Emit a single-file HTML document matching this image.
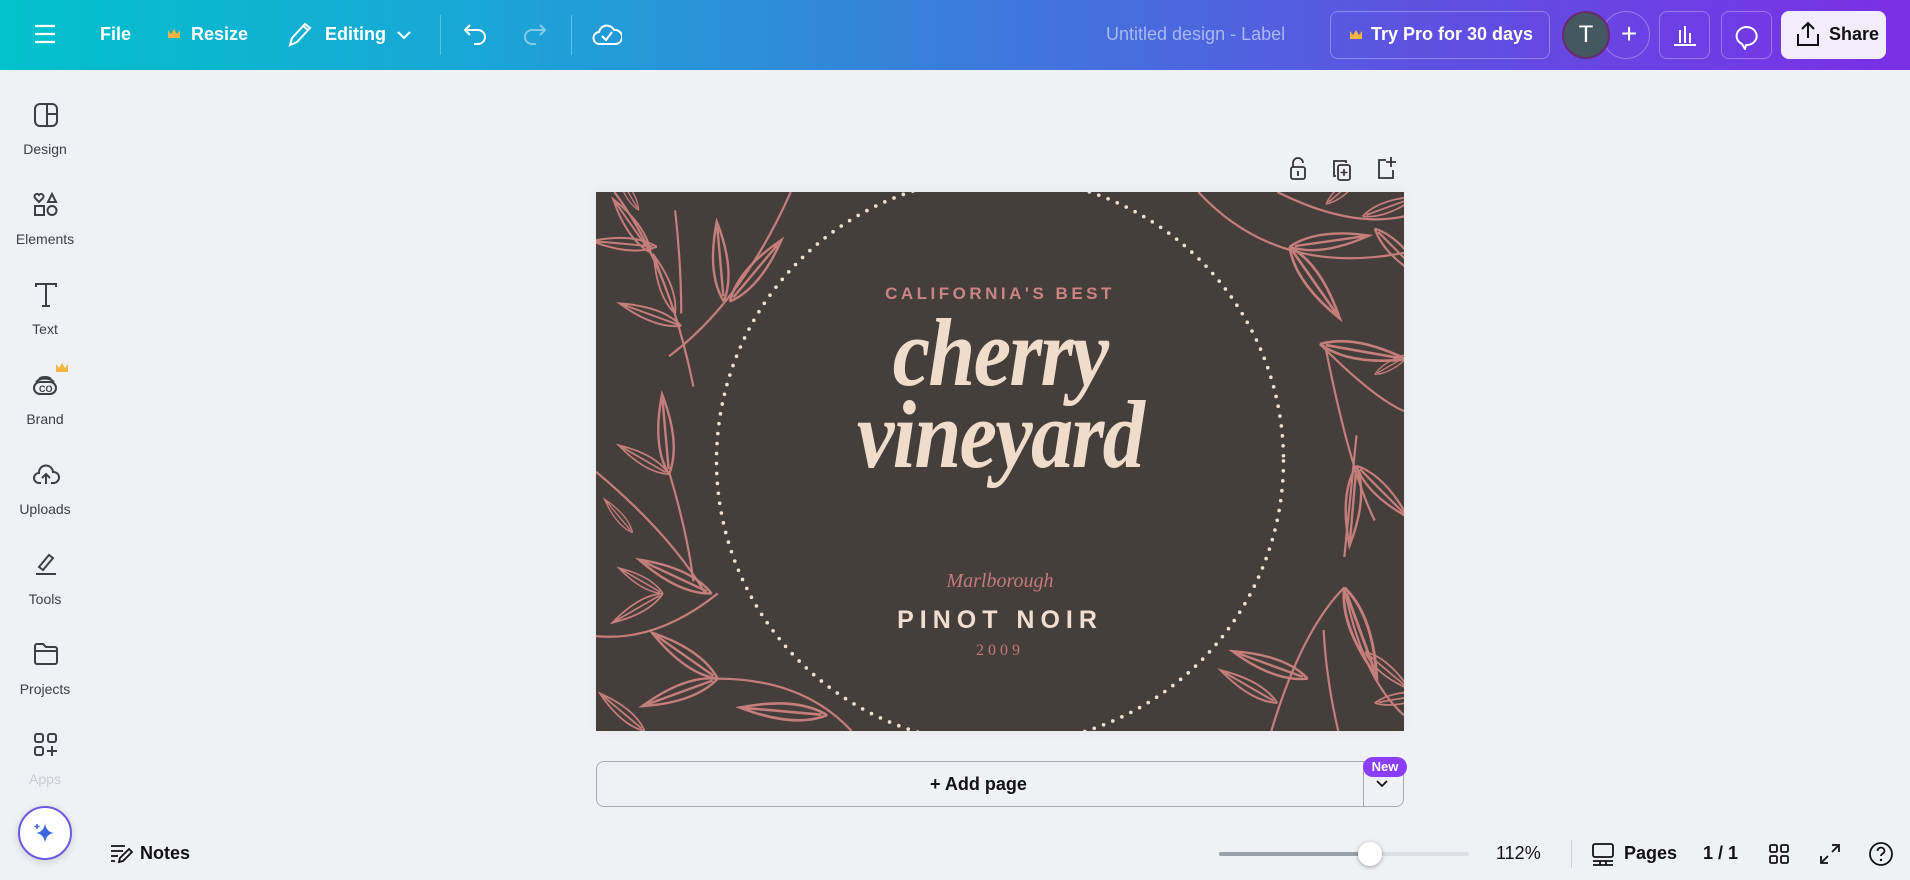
<!DOCTYPE html>
<html><head><meta charset="utf-8"><style>
*{margin:0;padding:0;box-sizing:border-box}
body{width:1910px;height:880px;overflow:hidden;background:#f0f1f5;font-family:"Liberation Sans",sans-serif;position:relative}
.top{position:absolute;left:0;top:0;width:1910px;height:70px;background:linear-gradient(90deg,#02c2cb 0%,#1aa6d6 25%,#3a7ddb 50%,#5a55e0 72%,#7b2fe6 100%)}
.t{position:absolute;color:#fff;font-weight:bold;font-size:18px;top:24px}
.ic{position:absolute}
.side{position:absolute;left:0;top:70px;width:90px;height:810px}
.si{position:absolute;width:90px;text-align:center;font-size:14px;color:#3b3f46}
.vd{position:absolute;width:1px;height:40px;top:15px;background:rgba(255,255,255,.3)}
</style></head><body>
<div class="top">
  <svg class="ic" style="left:34px;top:24px" width="22" height="20"><path d="M1 2h20M1 10h20M1 18h20" stroke="#fff" stroke-width="2.2"/></svg>
  <div class="t" style="left:100px">File</div>
  <svg class="ic" style="left:167px;top:28px" width="14" height="12"><path d="M1 2l3 4 3-5 3 5 3-4v8H1z" fill="#f5b342"/></svg>
  <div class="t" style="left:191px">Resize</div>
  <svg class="ic" style="left:286px;top:20px" width="26" height="28"><path d="M4 25l2-7L19 4l5 4-13 14z M17 6l5 4" stroke="#fff" stroke-width="2" fill="none"/></svg>
  <div class="t" style="left:325px">Editing</div>
  <svg class="ic" style="left:396px;top:30px" width="16" height="10"><path d="M2 2l6 6 6-6" stroke="#fff" stroke-width="2" fill="none"/></svg>
  <div class="vd" style="left:440px"></div>
  <svg class="ic" style="left:462px;top:22px" width="28" height="24"><path d="M8 3L3 8l5 5M3 8h13a7 7 0 010 14h-4" stroke="#fff" stroke-width="2" fill="none"/></svg>
  <svg class="ic" style="left:520px;top:22px" width="28" height="24"><path d="M20 3l5 5-5 5M25 8H12a7 7 0 000 14h4" stroke="rgba(255,255,255,.45)" stroke-width="2" fill="none"/></svg>
  <div class="vd" style="left:571px"></div>
  <svg class="ic" style="left:592px;top:20px" width="30" height="28"><path d="M8 24a6 6 0 01-1-12 8 8 0 0115-2 6 6 0 012 14z M10 16l4 4 6-8" stroke="#fff" stroke-width="2" fill="none"/></svg>
  <div class="t" style="left:1106px;color:#a9b8f3;font-weight:normal;font-size:18px">Untitled design - Label</div>
  <div style="position:absolute;left:1330px;top:11px;width:220px;height:48px;border:1px solid rgba(255,255,255,.3);border-radius:8px"></div>
  <svg class="ic" style="left:1349px;top:29px" width="14" height="12"><path d="M1 2l3 4 3-5 3 5 3-4v8H1z" fill="#f5b342"/></svg>
  <div class="t" style="left:1371px">Try Pro for 30 days</div>
  <div style="position:absolute;left:1602px;top:11px;width:48px;height:48px;border:1px solid rgba(255,255,255,.3);border-radius:50%"></div>
  <div style="position:absolute;left:1614px;top:18px;width:30px;text-align:center;color:#fff;font-size:28px">+</div>
  <div style="position:absolute;left:1562px;top:11px;width:48px;height:48px;border-radius:50%;background:#435861;border:2px solid #6a2a6e;color:#fff;font-size:24px;text-align:center;line-height:44px">T</div>
  <div style="position:absolute;left:1659px;top:11px;width:51px;height:48px;border:1px solid rgba(255,255,255,.3);border-radius:8px"></div>
  <svg class="ic" style="left:1672px;top:22px" width="26" height="26"><path d="M2 23h22M8 21V8M13 21V4M18 21V11" stroke="#fff" stroke-width="2" fill="none"/></svg>
  <div style="position:absolute;left:1721px;top:11px;width:51px;height:48px;border:1px solid rgba(255,255,255,.3);border-radius:8px"></div>
  <svg class="ic" style="left:1733px;top:22px" width="28" height="28"><path d="M9 22a10 9 0 114 1l-1 4z" stroke="#fff" stroke-width="2" fill="none"/></svg>
  <div style="position:absolute;left:1781px;top:11px;width:105px;height:48px;background:#f2edfd;border-radius:8px"></div>
  <svg class="ic" style="left:1795px;top:20px" width="26" height="28"><path d="M13 18V3M7 9l6-6 6 6M3 14v11h20V14" stroke="#111" stroke-width="2" fill="none"/></svg>
  <div class="t" style="left:1829px;color:#111">Share</div>
</div>

<div class="side">
  <svg class="ic" style="left:34px;top:33px" width="24" height="24"><rect x="1" y="1" width="22" height="22" rx="5" stroke="#3b3f46" stroke-width="2" fill="none"/><path d="M13 1v22M13 11h10" stroke="#3b3f46" stroke-width="2"/></svg>
  <div class="si" style="top:71px">Design</div>
  <svg class="ic" style="left:33px;top:122px" width="26" height="26"><path d="M6 10L2 6a2.5 2.5 0 014-3 2.5 2.5 0 014 3z M15 10l4-8 4 8z" stroke="#3b3f46" stroke-width="2" fill="none"/><rect x="2" y="14" width="9" height="9" stroke="#3b3f46" stroke-width="2" fill="none"/><circle cx="19" cy="18.5" r="4.5" stroke="#3b3f46" stroke-width="2" fill="none"/></svg>
  <div class="si" style="top:161px">Elements</div>
  <svg class="ic" style="left:34px;top:213px" width="24" height="24"><path d="M2 4V1h20v3M12 1v22M8 23h8" stroke="#3b3f46" stroke-width="2" fill="none"/></svg>
  <div class="si" style="top:251px">Text</div>
  <svg class="ic" style="left:32px;top:300px" width="30" height="28"><path d="M4 12a10 6 0 0118 0 M7 9a7 4 0 0112 0" stroke="#3b3f46" stroke-width="2" fill="none"/><rect x="2" y="12" width="22" height="12" rx="6" stroke="#3b3f46" stroke-width="2" fill="none"/><text x="7" y="22" font-size="9" font-weight="bold" fill="#3b3f46" font-family="Liberation Sans">CO</text></svg>
  <svg class="ic" style="left:55px;top:292px" width="14" height="12"><path d="M1 2l3 4 3-5 3 5 3-4v8H1z" fill="#f5b342"/></svg>
  <div class="si" style="top:341px">Brand</div>
  <svg class="ic" style="left:32px;top:391px" width="28" height="26"><path d="M9 22H7a5 5 0 010-10 7 7 0 0114-1 5 5 0 011 11h-3 M14 23v-10M10 17l4-4 4 4" stroke="#3b3f46" stroke-width="2" fill="none"/></svg>
  <div class="si" style="top:431px">Uploads</div>
  <svg class="ic" style="left:33px;top:481px" width="26" height="26"><path d="M6 16l10-12 4 3-10 12z M3 23h20" stroke="#3b3f46" stroke-width="2" fill="none"/></svg>
  <div class="si" style="top:521px">Tools</div>
  <svg class="ic" style="left:33px;top:572px" width="26" height="24"><path d="M2 4a2 2 0 012-2h6l3 3h9a2 2 0 012 2v13a2 2 0 01-2 2H4a2 2 0 01-2-2z M2 9h22" stroke="#3b3f46" stroke-width="2" fill="none"/></svg>
  <div class="si" style="top:611px">Projects</div>
  <svg class="ic" style="left:33px;top:662px" width="26" height="26"><rect x="2" y="2" width="8" height="8" rx="2" stroke="#3b3f46" stroke-width="2" fill="none"/><rect x="15" y="2" width="8" height="8" rx="2" stroke="#3b3f46" stroke-width="2" fill="none"/><rect x="2" y="15" width="8" height="8" rx="2" stroke="#3b3f46" stroke-width="2" fill="none"/><path d="M19 14v10M14 19h10" stroke="#3b3f46" stroke-width="2"/></svg>
  <div class="si" style="top:701px;color:#c9ccd2">Apps</div>
  <div style="position:absolute;left:18px;top:736px;width:54px;height:54px;border-radius:50%;background:#fff;border:2px solid #6a5ae0;box-shadow:0 2px 8px rgba(0,0,0,.15)"></div>
  <svg class="ic" style="left:32px;top:750px" width="26" height="26"><path d="M13 3q1 9 9 10q-8 1-9 10q-1-9-9-10q8-1 9-10z" fill="#3d66e0"/><path d="M5 4v5M2.5 6.5h5" stroke="#3d66e0" stroke-width="1.5"/></svg>
</div>

<svg class="ic" style="left:1289px;top:157px" width="18" height="24"><path d="M4 10V6a5 5 0 0110 0" stroke="#333" stroke-width="1.8" fill="none"/><rect x="2" y="10" width="14" height="12" rx="2" stroke="#333" stroke-width="1.8" fill="none"/><path d="M9 14v5" stroke="#333" stroke-width="1.8"/></svg>
<svg class="ic" style="left:1331px;top:158px" width="22" height="24"><path d="M5 18H3V3h12v2" stroke="#333" stroke-width="1.8" fill="none"/><rect x="7" y="7" width="12" height="15" rx="2" stroke="#333" stroke-width="1.8" fill="none"/><path d="M13 11v7M9.5 14.5h7" stroke="#333" stroke-width="1.6"/></svg>
<svg class="ic" style="left:1376px;top:156px" width="22" height="24"><path d="M10 4H3v18h14v-8 M15 1v10M10 6h10" stroke="#333" stroke-width="1.8" fill="none"/></svg>

<div style="position:absolute;left:596px;top:192px;width:808px;height:539px;background:#463e3a;overflow:hidden;box-shadow:0 0 12px rgba(0,0,0,.05)">
<svg width="808" height="539" viewBox="0 0 664 443" style="position:absolute;left:0;top:0">
<defs><path id="lf" d="M0 0Q22-11 60 0Q22 11 0 0M4 0L56 0" fill="none"/></defs>
<g stroke="#c47e7c" stroke-width="1.8" fill="none">
<path d="M15 0Q60 60 80 160"/><path d="M160 0Q120 90 60 135"/><path d="M65 15Q70 60 70 100"/>
<use href="#lf" transform="translate(45 50) rotate(-125) scale(.9)"/>
<use href="#lf" transform="translate(50 45) rotate(185) scale(.9)"/>
<use href="#lf" transform="translate(65 100) rotate(-110) scale(.85)"/>
<use href="#lf" transform="translate(70 110) rotate(200) scale(.9)"/>
<use href="#lf" transform="translate(105 90) rotate(-95) scale(1.1)"/>
<use href="#lf" transform="translate(110 90) rotate(-50) scale(1.1)"/>
<use href="#lf" transform="translate(35 15) rotate(-120) scale(.6)"/>
<path d="M0 230Q60 280 90 330"/><path d="M60 230Q75 280 80 320"/><path d="M0 365Q50 370 100 330"/>
<use href="#lf" transform="translate(60 232) rotate(-95) scale(1.1)"/>
<use href="#lf" transform="translate(60 232) rotate(-150) scale(.8)"/>
<use href="#lf" transform="translate(30 280) rotate(-130) scale(.6)"/>
<use href="#lf" transform="translate(95 330) rotate(205) scale(1.1)"/>
<use href="#lf" transform="translate(55 330) rotate(150) scale(.8)"/>
<use href="#lf" transform="translate(55 330) rotate(-150) scale(.7)"/>
<path d="M100 400Q170 400 210 443"/>
<use href="#lf" transform="translate(100 400) rotate(-145) scale(1.1)"/>
<use href="#lf" transform="translate(100 400) rotate(160) scale(1.1)"/>
<use href="#lf" transform="translate(40 443) rotate(-140) scale(.8)"/>
<use href="#lf" transform="translate(190 430) rotate(185) scale(1.2)"/>
<path d="M495 0Q560 70 664 50"/><path d="M560 0Q620 30 664 20"/>
<use href="#lf" transform="translate(570 45) rotate(-8) scale(1.1)"/>
<use href="#lf" transform="translate(570 45) rotate(55) scale(1.2)"/>
<use href="#lf" transform="translate(630 20) rotate(-20) scale(.8)"/>
<use href="#lf" transform="translate(640 30) rotate(45) scale(1)"/>
<use href="#lf" transform="translate(600 10) rotate(-40) scale(.7)"/>
<path d="M595 125Q640 170 664 180"/><path d="M600 130Q620 230 640 270"/><path d="M625 200Q620 250 615 300"/>
<use href="#lf" transform="translate(595 125) rotate(10) scale(1.2)"/>
<use href="#lf" transform="translate(640 150) rotate(-30) scale(.6)"/>
<use href="#lf" transform="translate(625 225) rotate(95) scale(1.1)"/>
<use href="#lf" transform="translate(625 225) rotate(45) scale(1)"/>
<path d="M555 443Q580 360 615 325"/><path d="M615 325Q630 400 664 430"/><path d="M598 360Q600 400 610 443"/>
<use href="#lf" transform="translate(615 325) rotate(70) scale(1.3)"/>
<use href="#lf" transform="translate(632 378) rotate(40) scale(.8)"/>
<use href="#lf" transform="translate(560 420) rotate(210) scale(.9)"/>
<use href="#lf" transform="translate(585 400) rotate(200) scale(1.1)"/>
<use href="#lf" transform="translate(640 420) rotate(-10) scale(.8)"/>
</g>
<circle cx="332" cy="221" r="233" fill="none" stroke="#efe0d2" stroke-width="3" stroke-linecap="round" stroke-dasharray="0 8.2"/>
</svg>
<div style="position:absolute;left:0;width:808px;top:92px;text-align:center;color:#c98583;font-size:17px;font-weight:bold;letter-spacing:3.5px">CALIFORNIA'S BEST</div>
<div style="position:absolute;left:0;width:808px;top:120px;text-align:center;color:#f0dccb;font-family:'Liberation Serif',serif;font-style:italic;font-weight:bold;font-size:96px;line-height:82px;letter-spacing:-2px;transform:scaleX(.88)">cherry<br>vineyard</div>
<div style="position:absolute;left:0;width:808px;top:378px;text-align:center;color:#c07c7a;font-family:'Liberation Serif',serif;font-style:italic;font-size:20px">Marlborough</div>
<div style="position:absolute;left:0;width:808px;top:414px;text-align:center;color:#f2dece;font-size:25px;font-weight:bold;letter-spacing:6px">PINOT NOIR</div>
<div style="position:absolute;left:0;width:808px;top:450px;text-align:center;color:#c07c7a;font-family:'Liberation Serif',serif;font-size:16px;letter-spacing:4px">2009</div>
</div>

<div style="position:absolute;left:596px;top:761px;width:808px;height:46px;border:1px solid #a9aab0;border-radius:8px"></div>
<div style="position:absolute;left:1363px;top:761px;width:1px;height:46px;background:#a9aab0"></div>
<div style="position:absolute;left:930px;top:774px;font-size:18px;font-weight:bold;color:#111">+ Add page</div>
<svg class="ic" style="left:1376px;top:780px" width="12" height="8"><path d="M1 1l5 5 5-5" stroke="#111" stroke-width="1.8" fill="none"/></svg>
<div style="position:absolute;left:1363px;top:757px;width:44px;height:20px;border-radius:10px;background:#8b3dff;color:#fff;font-size:13px;font-weight:bold;text-align:center;line-height:20px">New</div>

<svg class="ic" style="left:109px;top:843px" width="24" height="22"><path d="M2 3h14M2 8h12M2 13h7M2 18h4 M10 19l1-4 9-9 3 3-9 9z" stroke="#111" stroke-width="1.8" fill="none"/></svg>
<div style="position:absolute;left:140px;top:843px;font-size:18px;color:#111;font-weight:bold">Notes</div>
<div style="position:absolute;left:1219px;top:852px;width:250px;height:4px;border-radius:2px;background:#dcdfe4"></div>
<div style="position:absolute;left:1219px;top:852px;width:151px;height:4px;border-radius:2px;background:#9aa1ab"></div>
<div style="position:absolute;left:1358px;top:842px;width:24px;height:24px;border-radius:50%;background:#fff;box-shadow:0 1px 4px rgba(0,0,0,.35)"></div>
<div style="position:absolute;left:1496px;top:843px;font-size:18px;color:#111">112%</div>
<div style="position:absolute;left:1571px;top:840px;width:1px;height:28px;background:#d0d3d8"></div>
<svg class="ic" style="left:1591px;top:842px" width="24" height="24"><rect x="2" y="2" width="20" height="13" rx="2" stroke="#111" stroke-width="1.8" fill="none"/><path d="M2 19h20M2 23h20M9 19v4M15 19v4" stroke="#111" stroke-width="1.8"/></svg>
<div style="position:absolute;left:1624px;top:843px;font-size:18px;color:#111;font-weight:bold">Pages</div>
<div style="position:absolute;left:1703px;top:843px;font-size:18px;color:#111;font-weight:bold">1 / 1</div>
<svg class="ic" style="left:1768px;top:843px" width="22" height="22"><rect x="2" y="2" width="7" height="7" rx="1.5" stroke="#111" stroke-width="1.8" fill="none"/><rect x="13" y="2" width="7" height="7" rx="1.5" stroke="#111" stroke-width="1.8" fill="none"/><rect x="2" y="13" width="7" height="7" rx="1.5" stroke="#111" stroke-width="1.8" fill="none"/><rect x="13" y="13" width="7" height="7" rx="1.5" stroke="#111" stroke-width="1.8" fill="none"/></svg>
<svg class="ic" style="left:1819px;top:843px" width="22" height="22"><path d="M13 2h7v7M20 2l-7 7M9 20H2v-7M2 20l7-7" stroke="#111" stroke-width="1.8" fill="none"/></svg>
<svg class="ic" style="left:1868px;top:841px" width="26" height="26"><circle cx="13" cy="13" r="11" stroke="#111" stroke-width="1.8" fill="none"/><path d="M9.5 10a3.5 3.5 0 117 0c0 2.5-3.5 2.5-3.5 5" stroke="#111" stroke-width="1.8" fill="none"/><circle cx="13" cy="19" r="1.2" fill="#111"/></svg>
</body></html>
